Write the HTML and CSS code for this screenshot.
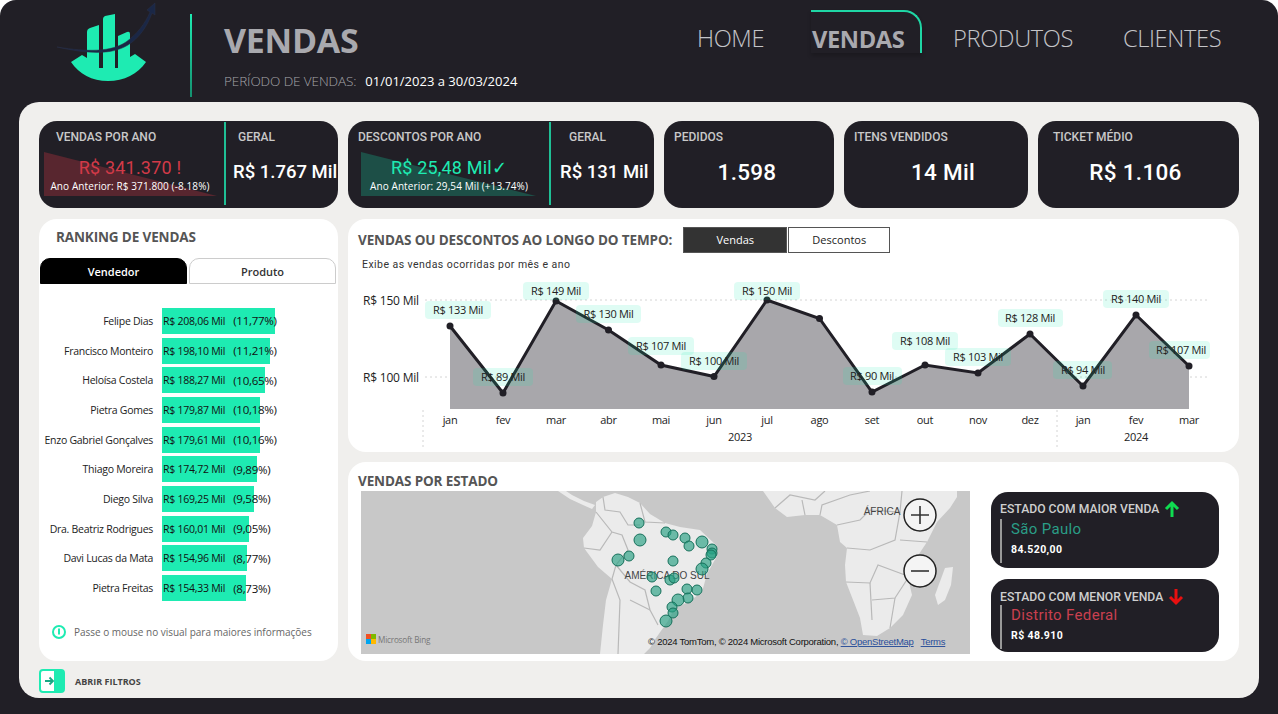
FILE: index.html
```html
<!DOCTYPE html>
<html lang="pt-BR">
<head>
  <meta charset="UTF-8">
  <title>Vendas</title>
  <link rel="stylesheet" href="styles.css">
</head>
<body>
<div class="dash">

  <header class="topbar">
    <div class="logo">
      <svg width="110" height="90" viewBox="50 0 110 90">
        <path d="M71 62 L82 55 L87 58 L87 32 Q87 29 90 28 L99 25 L99 68 L103 68 L103 19 Q103 17 105 16 L115 14 L115 68 L118 68 L118 36 L127 32 Q130 31 130 34 L130 57 L135 54 L146 62 C138 74 124 81 108 81 C92 81 79 74 71 62 Z" fill="#1eebb2"/>
        <path d="M57 47 C88 52 111 52 126 42 C137 34 145 24 150 12 L147 10 L155 3 L155 15 L152 13 C147 27 139 38 128 45 C112 55 88 54 57 47 Z" fill="#1a2746" stroke="#2a3148" stroke-width="0.5"/>
      </svg>
    </div>
    <div class="head-rule"></div>
    <div class="page-head">
      <h1 class="page-title">VENDAS</h1>
      <div class="period"><span class="period-label">PERÍODO DE VENDAS:</span><span class="period-value">01/01/2023 a 30/03/2024</span></div>
    </div>
    <nav class="nav">
      <a class="nav-item nav-home">HOME</a>
      <a class="nav-item nav-active">VENDAS</a>
      <a class="nav-item nav-prod">PRODUTOS</a>
      <a class="nav-item nav-cli">CLIENTES</a>
    </nav>
  </header>

  <main class="sheet">
    <section class="kpis">
      <div class="kpi kpi-split kpi-sales">
        <div class="kpi-main">
          <div class="kpi-title">VENDAS POR ANO</div>
          <div class="trend trend-red">
            <div class="trend-value">R$ 341.370 !</div>
            <div class="trend-sub">Ano Anterior: R$ 371.800 (-8.18%)</div>
          </div>
        </div>
        <div class="kpi-side">
          <div class="kpi-title">GERAL</div>
          <div class="side-value">R$ 1.767 Mil</div>
        </div>
      </div>
      <div class="kpi kpi-split kpi-disc">
        <div class="kpi-main">
          <div class="kpi-title">DESCONTOS POR ANO</div>
          <div class="trend trend-green">
            <div class="trend-value">R$ 25,48 Mil✓</div>
            <div class="trend-sub">Ano Anterior: 29,54 Mil (+13.74%)</div>
          </div>
        </div>
        <div class="kpi-side">
          <div class="kpi-title">GERAL</div>
          <div class="side-value">R$ 131 Mil</div>
        </div>
      </div>
      <div class="kpi kpi-plain kpi-orders">
        <div class="kpi-title">PEDIDOS</div>
        <div class="big-value">1.598</div>
      </div>
      <div class="kpi kpi-plain kpi-items">
        <div class="kpi-title">ITENS VENDIDOS</div>
        <div class="big-value">14 Mil</div>
      </div>
      <div class="kpi kpi-plain kpi-ticket">
        <div class="kpi-title">TICKET MÉDIO</div>
        <div class="big-value">R$ 1.106</div>
      </div>
    </section>

    <section class="panels">
      <aside class="panel ranking">
        <h2 class="panel-title ranking-title">RANKING DE VENDAS</h2>
        <div class="tabs">
          <div class="tab tab-on">Vendedor</div>
          <div class="tab">Produto</div>
        </div>
        <div class="rows">
          <div class="row"><span class="row-name">Felipe Dias</span><div class="row-track"><div class="row-bar" style="width:113px"></div><span class="row-val">R$ 208,06 Mil</span><span class="row-pct">(11,77%)</span></div></div>
          <div class="row"><span class="row-name">Francisco Monteiro</span><div class="row-track"><div class="row-bar" style="width:108px"></div><span class="row-val">R$ 198,10 Mil</span><span class="row-pct">(11,21%)</span></div></div>
          <div class="row"><span class="row-name">Heloísa Costela</span><div class="row-track"><div class="row-bar" style="width:103px"></div><span class="row-val">R$ 188,27 Mil</span><span class="row-pct">(10,65%)</span></div></div>
          <div class="row"><span class="row-name">Pietra Gomes</span><div class="row-track"><div class="row-bar" style="width:98px"></div><span class="row-val">R$ 179,87 Mil</span><span class="row-pct">(10,18%)</span></div></div>
          <div class="row"><span class="row-name">Enzo Gabriel Gonçalves</span><div class="row-track"><div class="row-bar" style="width:98px"></div><span class="row-val">R$ 179,61 Mil</span><span class="row-pct">(10,16%)</span></div></div>
          <div class="row"><span class="row-name">Thiago Moreira</span><div class="row-track"><div class="row-bar" style="width:95px"></div><span class="row-val">R$ 174,72 Mil</span><span class="row-pct">(9,89%)</span></div></div>
          <div class="row"><span class="row-name">Diego Silva</span><div class="row-track"><div class="row-bar" style="width:92px"></div><span class="row-val">R$ 169,25 Mil</span><span class="row-pct">(9,58%)</span></div></div>
          <div class="row"><span class="row-name">Dra. Beatriz Rodrigues</span><div class="row-track"><div class="row-bar" style="width:87px"></div><span class="row-val">R$ 160,01 Mil</span><span class="row-pct">(9,05%)</span></div></div>
          <div class="row"><span class="row-name">Davi Lucas da Mata</span><div class="row-track"><div class="row-bar" style="width:85px"></div><span class="row-val">R$ 154,96 Mil</span><span class="row-pct">(8,77%)</span></div></div>
          <div class="row"><span class="row-name">Pietra Freitas</span><div class="row-track"><div class="row-bar" style="width:84px"></div><span class="row-val">R$ 154,33 Mil</span><span class="row-pct">(8,73%)</span></div></div>
        </div>
        <div class="hint">
          <svg width="14" height="14" viewBox="0 0 14 14"><circle cx="7" cy="7" r="6" fill="#fff" stroke="#1eebb2" stroke-width="2"/><rect x="6" y="3.5" width="2" height="6" fill="#1eebb2"/></svg>
          <span>Passe o mouse no visual para maiores informações</span>
        </div>
      </aside>

      <div class="panel timeline">
        <div class="timeline-head">
          <h2 class="panel-title">VENDAS OU DESCONTOS AO LONGO DO TEMPO:</h2>
          <div class="toggle">
            <div class="toggle-btn toggle-on">Vendas</div>
            <div class="toggle-btn">Descontos</div>
          </div>
        </div>
        <div class="timeline-sub">Exibe as vendas ocorridas por mês e ano</div>
        <svg class="chart" width="891" height="177" viewBox="348 275 891 177">
          <g class="grid">
            <line x1="425" y1="300" x2="1210" y2="300"/>
            <line x1="425" y1="377" x2="1210" y2="377"/>
            <line x1="423" y1="410" x2="423" y2="448"/>
            <line x1="1057" y1="410" x2="1057" y2="448"/>
          </g>
          <text class="axis-y" x="363" y="305">R$ 150 Mil</text>
          <text class="axis-y" x="363" y="382">R$ 100 Mil</text>
          <polygon class="area" points="450,326 503,393 556,301 608.5,330 661,365 714,376.5 767,300 819.5,318.5 872,392 925,365 978,373 1030,334 1083,386 1136,315 1189,366 1189,409 450,409"/>
          <polyline class="line" points="450,326 503,393 556,301 608.5,330 661,365 714,376.5 767,300 819.5,318.5 872,392 925,365 978,373 1030,334 1083,386 1136,315 1189,366"/>
          <g class="dots">
            <circle cx="450" cy="326" r="3.5"/><circle cx="503" cy="393" r="3.5"/><circle cx="556" cy="301" r="3.5"/><circle cx="608.5" cy="330" r="3.5"/><circle cx="661" cy="365" r="3.5"/><circle cx="714" cy="376.5" r="3.5"/><circle cx="767" cy="300" r="3.5"/><circle cx="819.5" cy="318.5" r="3.5"/><circle cx="872" cy="392" r="3.5"/><circle cx="925" cy="365" r="3.5"/><circle cx="978" cy="373" r="3.5"/><circle cx="1030" cy="334" r="3.5"/><circle cx="1083" cy="386" r="3.5"/><circle cx="1136" cy="315" r="3.5"/><circle cx="1189" cy="366" r="3.5"/>
          </g>
          <g class="tags">
            <rect x="425" y="301" width="66" height="18" rx="4"/><rect x="473" y="368" width="60" height="18" rx="4"/><rect x="523" y="282" width="66" height="18" rx="4"/><rect x="576" y="305" width="65" height="18" rx="4"/><rect x="628" y="337" width="66" height="18" rx="4"/><rect x="681" y="352" width="66" height="18" rx="4"/><rect x="734" y="282" width="66" height="18" rx="4"/><rect x="843" y="367" width="59" height="18" rx="4"/><rect x="892" y="332" width="66" height="18" rx="4"/><rect x="945" y="348" width="66" height="18" rx="4"/><rect x="998" y="309" width="65" height="18" rx="4"/><rect x="1053" y="361" width="59" height="18" rx="4"/><rect x="1103" y="290" width="66" height="18" rx="4"/><rect x="1149" y="341" width="61" height="18" rx="4"/>
          </g>
          <g class="tag-text">
            <text x="458" y="314">R$ 133 Mil</text><text x="503" y="381">R$ 89 Mil</text><text x="556" y="295">R$ 149 Mil</text><text x="608.5" y="318">R$ 130 Mil</text><text x="661" y="350">R$ 107 Mil</text><text x="714" y="365">R$ 100 Mil</text><text x="767" y="295">R$ 150 Mil</text><text x="872" y="380">R$ 90 Mil</text><text x="925" y="345">R$ 108 Mil</text><text x="978" y="361">R$ 103 Mil</text><text x="1030" y="322">R$ 128 Mil</text><text x="1083" y="374">R$ 94 Mil</text><text x="1136" y="303">R$ 140 Mil</text><text x="1181" y="354">R$ 107 Mil</text>
          </g>
          <g class="axis-x">
            <text x="450" y="424">jan</text><text x="503" y="424">fev</text><text x="556" y="424">mar</text><text x="608.5" y="424">abr</text><text x="661" y="424">mai</text><text x="714" y="424">jun</text><text x="767" y="424">jul</text><text x="819.5" y="424">ago</text><text x="872" y="424">set</text><text x="925" y="424">out</text><text x="978" y="424">nov</text><text x="1030" y="424">dez</text><text x="1083" y="424">jan</text><text x="1136" y="424">fev</text><text x="1189" y="424">mar</text>
            <text x="740" y="441">2023</text><text x="1136" y="441">2024</text>
          </g>
        </svg>
      </div>

      <div class="panel states">
        <h2 class="panel-title states-title">VENDAS POR ESTADO</h2>
        <div class="states-body">
          <svg class="map" width="609" height="163" viewBox="361 491 609 163">
            <rect x="361" y="491" width="609" height="163" fill="#c8c8c8"/>
            <g class="land">
              <path d="M596 502 L603 497 L615 493 L628 497 L640 503 L650 514 L665 523 L680 527 L700 530 L715 544 L717 556 L707 574 L702 592 L690 601 L674 609 L668 621 L656 638 L650 648 L644 654 L600 654 L603 625 L606 600 L612 579 L598 567 L584 548 L583 538 L592 526 L596 512 Z"/>
              <path d="M558 491 L570 499 L583 505 L592 509 L595 505 L584 501 L572 495 L566 491 Z"/>
              <path d="M763 491 L775 508 L787 517 L805 515 L820 515 L837 525 L840 542 L847 548 L845 565 L846 582 L855 605 L860 618 L863 635 L877 636 L890 628 L903 615 L912 595 L908 578 L915 560 L927 542 L937 522 L950 508 L957 497 L957 491 Z"/>
              <path d="M945 568 L953 567 L951 585 L945 600 L938 605 L935 595 Z"/>
            </g>
            <g class="borders">
              <path d="M603 497 L605 510 L620 512 L628 525 L640 525"/>
              <path d="M596 512 L612 532 L622 535 L628 550 L616 565 L612 579"/>
              <path d="M584 548 L600 550 L612 532"/>
              <path d="M616 565 L630 582 L645 590 L650 610 L658 625"/>
              <path d="M612 579 L620 600 L618 654"/>
              <path d="M630 600 L650 610"/>
              <path d="M640 503 L645 522 L665 523"/>
              <path d="M775 508 L790 495 L815 500 L825 491"/>
              <path d="M805 515 L802 500 M820 515 L822 505 L850 495 L870 491"/>
              <path d="M837 525 L860 520 L870 510 L900 512 L902 491"/>
              <path d="M847 548 L870 550 L895 540 L900 512"/>
              <path d="M846 582 L870 583 L878 565 L905 575"/>
              <path d="M870 583 L872 620 M872 600 L895 598 L908 578"/>
              <path d="M895 598 L890 628"/>
              <path d="M900 540 L927 542"/>
            </g>
            <g class="geo-label">
              <text x="667" y="579">AMÉRICA DO SUL</text>
              <text x="882" y="515">ÁFRICA</text>
            </g>
            <g class="bubbles">
              <circle cx="639" cy="523" r="5"/><circle cx="640" cy="540" r="6"/><circle cx="618" cy="560" r="6"/><circle cx="629" cy="556" r="5"/><circle cx="666" cy="532" r="5"/><circle cx="673" cy="535" r="5"/><circle cx="685" cy="538" r="5"/><circle cx="689" cy="546" r="5"/><circle cx="702" cy="542" r="6"/><circle cx="712" cy="549" r="5"/><circle cx="712" cy="553" r="5"/><circle cx="711" cy="555" r="5"/><circle cx="706" cy="563" r="5"/><circle cx="702" cy="569" r="6"/><circle cx="673" cy="561" r="5"/><circle cx="652" cy="577" r="5"/><circle cx="670" cy="580" r="5"/><circle cx="674" cy="578" r="5"/><circle cx="656" cy="591" r="5"/><circle cx="687" cy="589" r="5"/><circle cx="697" cy="590" r="5"/><circle cx="688" cy="598" r="5"/><circle cx="678" cy="600" r="6"/><circle cx="672" cy="607" r="5"/><circle cx="673" cy="613" r="5"/><circle cx="666" cy="621" r="6"/>
            </g>
            <g class="map-btn">
              <circle cx="920" cy="515" r="16"/><path d="M911 515 H929 M920 506 V524"/>
              <circle cx="920" cy="571" r="16"/><path d="M911 571 H929"/>
            </g>
            <rect x="366" y="634" width="5" height="5" fill="#f25022"/><rect x="371" y="634" width="5" height="5" fill="#7fba00"/><rect x="366" y="639" width="5" height="5" fill="#00a4ef"/><rect x="371" y="639" width="5" height="5" fill="#ffb900"/>
            <text class="bing" x="378" y="643">Microsoft Bing</text>
            <text class="attrib" x="648" y="645">© 2024 TomTom, © 2024 Microsoft Corporation, <tspan class="attrib-link">© OpenStreetMap</tspan><tspan class="attrib-link" dx="7">Terms</tspan></text>
          </svg>
          <div class="state-cards">
            <div class="state-card state-top">
              <div class="state-title">ESTADO COM MAIOR VENDA
                <svg width="16" height="18" viewBox="0 0 16 18"><path d="M8 17 V3 M2 9 L8 3 L14 9" fill="none" stroke="#0fdc50" stroke-width="3"/></svg>
              </div>
              <div class="state-info">
                <div class="state-name state-name-good">São Paulo</div>
                <div class="state-val">84.520,00</div>
              </div>
            </div>
            <div class="state-card state-low">
              <div class="state-title">ESTADO COM MENOR VENDA
                <svg width="16" height="18" viewBox="0 0 16 18"><path d="M8 1 V15 M2 9 L8 15 L14 9" fill="none" stroke="#e81010" stroke-width="3"/></svg>
              </div>
              <div class="state-info">
                <div class="state-name state-name-bad">Distrito Federal</div>
                <div class="state-val">R$ 48.910</div>
              </div>
            </div>
          </div>
        </div>
      </div>
    </section>

    <div class="filters">
      <svg width="26" height="24" viewBox="0 0 26 24"><rect x="1" y="1" width="24" height="22" rx="3" fill="#fff" stroke="#1eebb2" stroke-width="2"/><path d="M15 1 H22 Q25 1 25 4 V20 Q25 23 22 23 H15 Z" fill="#1eebb2"/><path d="M6 12 H14 M10.5 8.5 L14 12 L10.5 15.5" fill="none" stroke="#17a884" stroke-width="1.8"/></svg>
      <span>ABRIR FILTROS</span>
    </div>
  </main>
</div>
</body>
</html>
```

FILE: styles.css
```css
* {
  box-sizing: border-box;
}

body {
  margin: 0;
  background: #fff;
  font-family: "Open Sans", sans-serif;
}

.dash {
  width: 1278px;
  height: 714px;
  overflow: hidden;
  background: #211f26;
  border-radius: 16px 16px 0 0;
  display: flex;
  flex-direction: column;
}

/* topo */
.topbar {
  height: 102px;
  flex: none;
  display: flex;
}

.logo {
  width: 190px;
  padding: 0 0 0 50px;
}

.head-rule {
  width: 2px;
  height: 83px;
  margin-top: 14px;
  background: linear-gradient(#1eebb2, #14906f);
}

.page-head {
  margin-left: 32px;
  width: 442px;
}

.page-title {
  margin: 16px 0 0;
  font-size: 34px;
  line-height: 48px;
  font-weight: 700;
  letter-spacing: -0.3px;
  color: #a9a9ae;
}

.period {
  margin-top: 8px;
  display: flex;
  align-items: center;
  line-height: 18px;
}

.period-label {
  font-size: 13.5px;
  font-weight: 300;
  color: #a5a5a9;
  letter-spacing: -0.1px;
}

.period-value {
  margin-left: 9px;
  font-size: 13px;
  color: #fff;
}

.nav {
  display: flex;
  height: 43px;
  margin: 10px 0 0 31px;
}

.nav-item {
  font-size: 23.7px;
  font-weight: 300;
  line-height: 57px;
  color: #c4c4c8;
  letter-spacing: -0.4px;
}

.nav-home {
  width: 114px;
}

.nav-active {
  width: 111px;
  padding-left: 1px;
  font-weight: 700;
  color: #a9a9ae;
  letter-spacing: -0.4px;
  border-top: 2px solid #1fd6a5;
  border-right: 2px solid #1fd6a5;
  border-top-right-radius: 18px;
  line-height: 54px;
  box-shadow: 0 3px 4px rgba(0, 0, 0, 0.2);
}

.nav-prod {
  width: 201px;
  padding-left: 31px;
  flex: none;
}

.nav-cli {
  width: 110px;
  flex: none;
}

/* folha */
.sheet {
  width: 1240px;
  height: 596px;
  flex: none;
  margin-left: 19px;
  padding: 19px 20px 0;
  background: #f0efed;
  border-radius: 20px;
}

.kpis {
  display: flex;
  gap: 10px;
  height: 87px;
}

.kpi {
  background: #211f26;
  border-radius: 18px;
  color: #fff;
  font-family: Roboto, sans-serif;
}

.kpi-split {
  display: flex;
  padding: 1px 0 3px;
}

.kpi-sales {
  width: 299px;
}

.kpi-disc {
  width: 306px;
}

.kpi-orders {
  width: 170px;
}

.kpi-items {
  width: 184px;
}

.kpi-ticket {
  width: 201px;
}

.kpi-title {
  font-size: 12px;
  font-weight: 500;
  line-height: 16px;
  color: #c9c9c9;
}

.kpi-main {
  position: relative;
  flex: none;
  border-right: 2px solid #1fbf95;
  padding: 7px 0 0 17px;
}

.kpi-sales .kpi-main {
  width: 187px;
}

.kpi-disc .kpi-main {
  width: 203px;
  padding-left: 10px;
}

.trend {
  position: relative;
  margin-top: 12px;
  text-align: center;
}

.trend::before {
  content: "";
  position: absolute;
  top: -5px;
  height: 44px;
  clip-path: polygon(0 0, 100% 100%, 0 100%);
}

.trend-red::before {
  left: -12px;
  width: 173px;
  background: #58262f;
}

.trend-green::before {
  left: 3px;
  width: 175px;
  background: #1d4f47;
}

.trend-value {
  position: relative;
  font-size: 18px;
  line-height: 22px;
  letter-spacing: 0.2px;
}

.trend-red .trend-value {
  color: #d23a48;
  margin-left: -20px;
}

.trend-green .trend-value {
  color: #1eebb2;
  margin-left: -9px;
}

.trend-sub {
  position: relative;
  font-family: "Open Sans", sans-serif;
  font-size: 10px;
  line-height: 13px;
  margin-top: 1px;
  letter-spacing: 0.1px;
  white-space: nowrap;
}

.trend-red .trend-sub {
  margin-left: -20px;
}

.trend-green .trend-sub {
  margin-left: -9px;
}

.kpi-side {
  flex: 1;
  min-width: 0;
  padding-top: 7px;
}

.kpi-sales .kpi-side .kpi-title {
  padding-left: 12px;
}

.kpi-disc .kpi-side .kpi-title {
  padding-left: 18px;
}

.side-value {
  margin-top: 14px;
  padding-left: 7px;
  font-size: 18.5px;
  line-height: 26px;
  font-weight: 500;
  white-space: nowrap;
}

.kpi-disc .side-value {
  padding-left: 9px;
}

.kpi-plain {
  padding: 8px 0 0 10px;
}

.kpi-ticket {
  padding-left: 15px;
}

.big-value {
  margin-top: 11px;
  font-size: 22.5px;
  line-height: 32px;
  font-weight: 500;
  letter-spacing: 0.3px;
  text-align: center;
}

.kpi-orders .big-value {
  padding-right: 14px;
}

.kpi-items .big-value {
  padding-left: 4px;
}

.kpi-ticket .big-value {
  padding-right: 21px;
}

/* paineis */
.panels {
  display: grid;
  grid-template-columns: 299px 891px;
  grid-template-rows: 233px 199px;
  gap: 10px;
  margin-top: 11px;
}

.panel {
  background: #fff;
  border-radius: 18px;
}

.panel-title {
  margin: 0;
  font-size: 13.5px;
  font-weight: 700;
  line-height: 18px;
  color: #555;
  letter-spacing: -0.13px;
}

.ranking {
  grid-row: 1 / 3;
  padding-top: 9px;
}

.ranking-title {
  padding-left: 17px;
}

.tabs {
  display: flex;
  gap: 2px;
  margin: 12px 0 0 1px;
}

.tab {
  width: 147px;
  height: 26px;
  border: 1px solid #ccc;
  border-radius: 10px 10px 0 0;
  font-size: 11px;
  font-weight: 600;
  line-height: 25px;
  text-align: center;
  color: #333;
}

.tab-on {
  background: #000;
  border-color: #000;
  color: #fff;
}

.rows {
  margin-top: 22px;
}

.row {
  display: flex;
  height: 29.7px;
  align-items: center;
  font-size: 10.5px;
  color: #222;
}

.row-name {
  width: 114px;
  margin-right: 9px;
  text-align: right;
  white-space: nowrap;
  letter-spacing: -0.27px;
}

.row-track {
  position: relative;
  flex: 1;
  height: 26px;
  display: flex;
  align-items: center;
  padding-left: 1px;
}

.row-bar {
  position: absolute;
  left: 0;
  top: 0;
  height: 26px;
  background: #1eebb2;
}

.row-val,
.row-pct {
  position: relative;
  letter-spacing: -0.25px;
  color: #111;
}

.row-pct {
  margin-left: 8px;
  font-size: 11.5px;
}

.hint {
  display: flex;
  align-items: center;
  gap: 8px;
  margin: 22px 0 0 13px;
  font-size: 10px;
  color: #666;
  letter-spacing: -0.02px;
}

.timeline {
  padding: 8px 0 0 10px;
  overflow: hidden;
}

.timeline-head {
  display: flex;
  align-items: center;
  gap: 11px;
  height: 26px;
}

.toggle {
  display: flex;
  gap: 1px;
}

.toggle-btn {
  width: 102px;
  height: 26px;
  border: 1px solid #555;
  font-size: 11px;
  line-height: 24px;
  text-align: center;
  color: #222;
}

.toggle-on {
  background: #333;
  color: #fff;
  width: 104px;
}

.timeline-sub {
  margin: 4px 0 0 4px;
  font-family: Roboto, sans-serif;
  font-size: 10.5px;
  line-height: 15px;
  color: #333;
  letter-spacing: 0.45px;
}

.chart {
  display: block;
  margin: 3px 0 0 -10px;
}

.grid line {
  stroke: #d4d4d4;
  stroke-width: 1;
  stroke-dasharray: 2 3;
}

.axis-y {
  font-size: 12px;
  fill: #222;
  letter-spacing: -0.2px;
}

.area {
  fill: #a8a7ab;
}

.line {
  fill: none;
  stroke: #211f26;
  stroke-width: 3;
}

.dots circle {
  fill: #211f26;
}

.tags rect {
  fill: #1eebb2;
  fill-opacity: 0.14;
}

.tag-text text,
.axis-x text {
  text-anchor: middle;
  font-size: 11px;
  fill: #222;
  letter-spacing: -0.3px;
}

.states {
  grid-column: 2;
  padding: 9px 0 0 10px;
}

.states-title {
  line-height: 20px;
}

.states-body {
  display: flex;
  margin-left: 3px;
}

.map {
  display: block;
  flex: none;
}

.land path {
  fill: #ebebeb;
}

.borders path {
  fill: none;
  stroke: #b9b9b9;
  stroke-width: 1.2;
}

.geo-label text {
  font-family: "Liberation Sans", sans-serif;
  font-size: 10px;
  fill: #444;
  text-anchor: middle;
}

.bubbles circle {
  fill: #27a083;
  fill-opacity: 0.65;
  stroke: #16705b;
  stroke-width: 1;
}

.map-btn circle {
  fill: #f4f4f4;
  stroke: #222;
  stroke-width: 1.5;
}

.map-btn path {
  fill: none;
  stroke: #333;
  stroke-width: 1.6;
}

.bing {
  font-family: "Open Sans", sans-serif;
  font-size: 8.2px;
  fill: #777;
  letter-spacing: -0.2px;
}

.attrib {
  font-family: "Liberation Sans", sans-serif;
  font-size: 9.5px;
  letter-spacing: -0.25px;
  fill: #111;
}

.attrib-link {
  fill: #2a4f9a;
  text-decoration: underline;
}

.state-cards {
  margin: 1px 0 0 21px;
  width: 228px;
  display: flex;
  flex-direction: column;
  gap: 11px;
}

.state-card {
  background: #211f26;
  border-radius: 17px;
  padding: 8px 0 0 9px;
  font-family: Roboto, sans-serif;
}

.state-top {
  height: 76px;
}

.state-low {
  height: 73px;
  padding-top: 9px;
}

.state-title {
  display: flex;
  align-items: center;
  gap: 5px;
  height: 17px;
  font-size: 12.2px;
  font-weight: 500;
  white-space: nowrap;
  color: #cfcfcf;
}

.state-info {
  margin-top: 2px;
  padding-left: 9px;
  height: 44px;
  border-left: 2px solid #999;
}

.state-low .state-info {
  margin-top: 1px;
}

.state-name {
  font-size: 15px;
  line-height: 20px;
  letter-spacing: 0.35px;
}

.state-name-good {
  color: #2a9d86;
}

.state-name-bad {
  color: #c9404f;
  margin-top: -1px;
}

.state-val {
  margin-top: 3px;
  font-size: 10.5px;
  font-weight: 700;
  line-height: 16px;
  color: #fff;
  letter-spacing: 0.4px;
}

.filters {
  display: flex;
  align-items: center;
  gap: 10px;
  margin-top: 8px;
  font-size: 9px;
  font-weight: 700;
  color: #444;
}
```
